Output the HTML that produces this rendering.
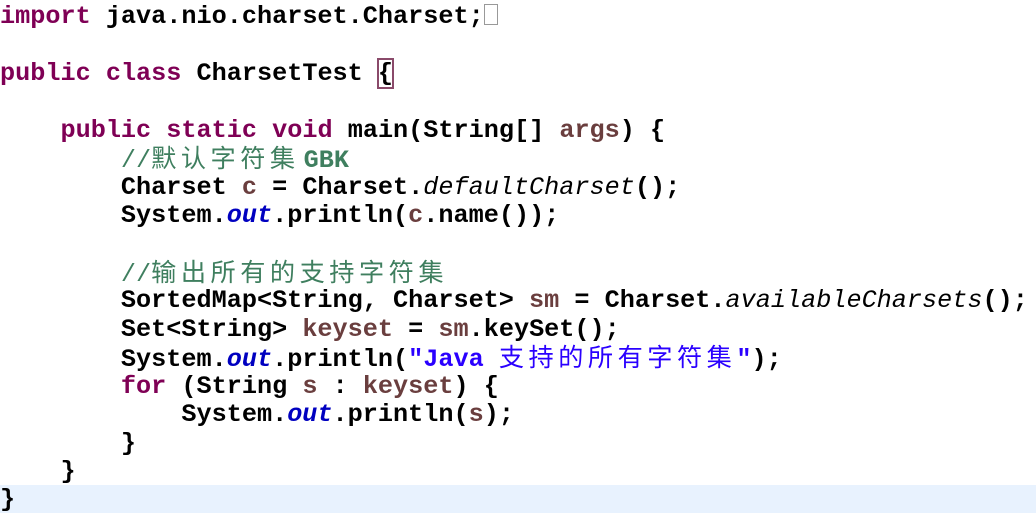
<!DOCTYPE html>
<html><head><meta charset="utf-8"><style>
html,body{margin:0;padding:0;background:#fff;width:1036px;height:519px;overflow:hidden}
.code{position:absolute;left:0;top:3px;font-family:"Liberation Mono","Noto Sans CJK SC",monospace;font-weight:bold;font-size:25.2px;color:#000}
.code div{height:28.45px;line-height:28.45px;white-space:pre;overflow:visible}
.hl{position:absolute;left:0;top:485px;width:1036px;height:28px;background:#e8f2fe}
.k{color:#7f0055}.c{color:#3f7f5f;font-weight:normal}.c b{font-weight:bold}
.s{color:#2a00ff}.f{color:#0000c0;font-style:italic}.v{color:#6a3e3e}.i{font-style:italic;font-weight:normal}
.z{font-family:"Noto Sans CJK SC",sans-serif;font-weight:normal;letter-spacing:4.5px;line-height:1;vertical-align:baseline}
.box{display:inline-block;width:12px;height:19px;border:1px solid #999;vertical-align:-2px}
.br{outline:2px solid #8a4a6a;outline-offset:-1px}
</style></head><body>
<div class="hl"></div>
<div class="code">
<div><span class="k">import</span> java.nio.charset.Charset;<span class="box"></span></div>
<div> </div>
<div><span class="k">public</span> <span class="k">class</span> CharsetTest <span class="br">{</span></div>
<div> </div>
<div>    <span class="k">public</span> <span class="k">static</span> <span class="k">void</span> main(String[] <span class="v">args</span>) {</div>
<div>        <span class="c">//<span class="z">默认字符集</span><b style="margin-left:4px">GBK</b></span></div>
<div>        Charset <span class="v">c</span> = Charset.<span class="i">defaultCharset</span>();</div>
<div>        System.<span class="f">out</span>.println(<span class="v">c</span>.name());</div>
<div> </div>
<div>        <span class="c">//<span class="z">输出所有的支持字符集</span></span></div>
<div>        SortedMap&lt;String, Charset&gt; <span class="v">sm</span> = Charset.<span class="i">availableCharsets</span>();</div>
<div>        Set&lt;String&gt; <span class="v">keyset</span> = <span class="v">sm</span>.keySet();</div>
<div>        System.<span class="f">out</span>.println(<span class="s">"Java <span class="z">支持的所有字符集</span>"</span>);</div>
<div>        <span class="k">for</span> (String <span class="v">s</span> : <span class="v">keyset</span>) {</div>
<div>            System.<span class="f">out</span>.println(<span class="v">s</span>);</div>
<div>        }</div>
<div>    }</div>
<div>}</div>
</div>
</body></html>
